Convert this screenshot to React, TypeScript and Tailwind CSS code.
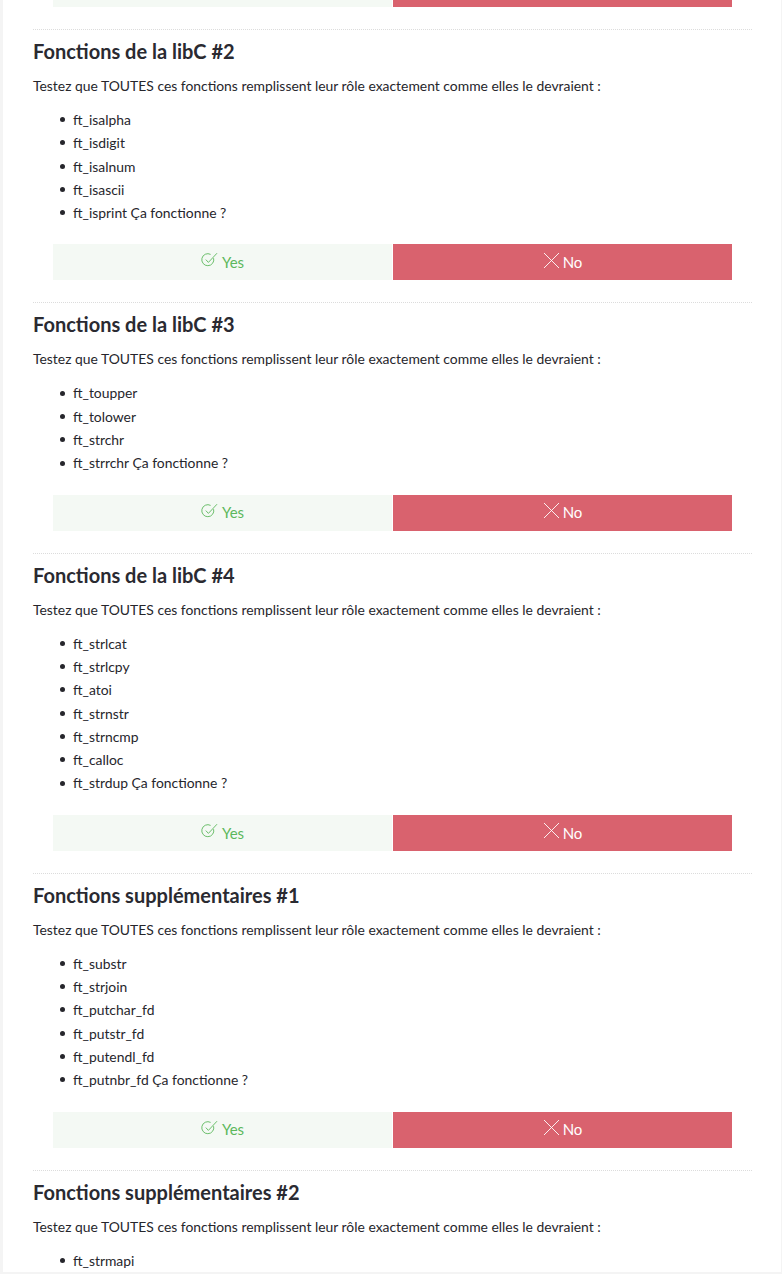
const sections = [
  {
    title: "Fonctions de la libC #2",
    items: ["ft_isalpha", "ft_isdigit", "ft_isalnum", "ft_isascii", "ft_isprint Ça fonctionne ?"],
  },
  {
    title: "Fonctions de la libC #3",
    items: ["ft_toupper", "ft_tolower", "ft_strchr", "ft_strrchr Ça fonctionne ?"],
  },
  {
    title: "Fonctions de la libC #4",
    items: ["ft_strlcat", "ft_strlcpy", "ft_atoi", "ft_strnstr", "ft_strncmp", "ft_calloc", "ft_strdup Ça fonctionne ?"],
  },
  {
    title: "Fonctions supplémentaires #1",
    items: ["ft_substr", "ft_strjoin", "ft_putchar_fd", "ft_putstr_fd", "ft_putendl_fd", "ft_putnbr_fd Ça fonctionne ?"],
  },
  {
    title: "Fonctions supplémentaires #2",
    items: ["ft_strmapi"],
    open: true,
  },
];

function CheckIcon() {
  return (
    <svg width="17" height="16" viewBox="0 0 17 16" fill="none" stroke="currentColor" strokeWidth="0.9">
      <path d="M12.6 6.2A6 6 0 1 1 9.6 2.4" />
      <path d="M4.8 7.6l2.6 2.8L16 1.2" />
    </svg>
  );
}

function CrossIcon() {
  return (
    <svg width="17" height="17" viewBox="0 0 17 17" fill="none" stroke="currentColor" strokeWidth="0.9">
      <path d="M1 1l15 15M16 1L1 16" />
    </svg>
  );
}

function Buttons() {
  return (
    <div className="mx-[20px] flex h-[36px] text-[15px]">
      <button type="button" className="flex flex-1 items-center justify-center gap-[4px] bg-[#f4f9f4] text-[#5cb85c]">
        <span className="-mt-[4px]">
          <CheckIcon />
        </span>
        Yes
      </button>
      <button type="button" className="ml-px flex flex-1 items-center justify-center gap-[3px] bg-[#d9626e] text-white">
        <span className="-mt-[4px]">
          <CrossIcon />
        </span>
        No
      </button>
    </div>
  );
}

export default function App() {
  return (
    <div
      className="min-h-[1274px] overflow-hidden bg-[#f4f4f4] pl-[3px] pr-px text-[#26262c]"
      style={{ fontFamily: "Lato, 'Noto Sans', sans-serif" }}
    >
      <div className="min-h-[1274px] bg-white pl-[30px] pr-[29px]">
        <div className="-mt-[29px]">
          <Buttons />
        </div>
        {sections.map((section) => (
          <section key={section.title}>
            <div className="mt-[22px] border-t border-dotted border-[#dcdcdc]" />
            <h2 className="mt-[9px] text-[20px] leading-[24px] font-bold text-[#2a2a31]">{section.title}</h2>
            <p className="mt-[11px] text-[13.9px] leading-[24px]">
              Testez que TOUTES ces fonctions remplissent leur rôle exactement comme elles le devraient :
            </p>
            <ul className="mt-[10px] pl-[27px] text-[13.9px] leading-[23.3px]">
              {section.items.map((item) => (
                <li key={item} className="flex items-center">
                  <span className="mr-[8px] inline-block size-[5px] rounded-full bg-[#26262c]" />
                  {item}
                </li>
              ))}
            </ul>
            {!section.open && (
              <div className="mt-[20px]">
                <Buttons />
              </div>
            )}
          </section>
        ))}
      </div>
    </div>
  );
}
